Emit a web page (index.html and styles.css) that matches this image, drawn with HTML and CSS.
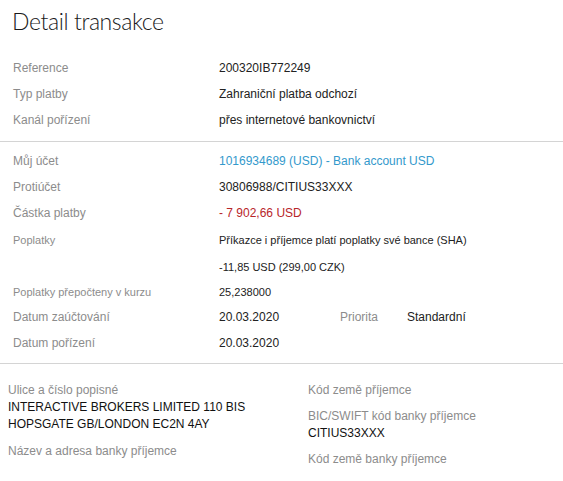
FILE: index.html
```html
<!DOCTYPE html>
<html lang="cs">
<head>
  <meta charset="UTF-8">
  <meta name="viewport" content="width=device-width, initial-scale=1.0">
  <link rel="stylesheet" href="styles.css">
  <title>Detail transakce</title>
</head>
<body>
  <h1 class="title">Detail transakce</h1>

  <div class="section">
    <div class="row"><span class="label">Reference</span><span class="value">200320IB772249</span></div>
    <div class="row"><span class="label">Typ platby</span><span class="value">Zahraniční platba odchozí</span></div>
    <div class="row"><span class="label">Kanál pořízení</span><span class="value">přes internetové bankovnictví</span></div>
  </div>

  <div class="section second">
    <div class="row"><span class="label">Můj účet</span><span class="value link">1016934689 (USD) - Bank account USD</span></div>
    <div class="row"><span class="label">Protiúčet</span><span class="value">30806988/CITIUS33XXX</span></div>
    <div class="row"><span class="label">Částka platby</span><span class="value negative">- 7 902,66 USD</span></div>
    <div class="row small tall"><span class="label">Poplatky</span><span class="value">Příkazce i příjemce platí poplatky své bance (SHA)</span></div>
    <div class="row small tall"><span class="label"></span><span class="value">-11,85 USD (299,00 CZK)</span></div>
    <div class="row small short"><span class="label">Poplatky přepočteny v kurzu</span><span class="value">25,238000</span></div>
    <div class="row">
      <span class="label">Datum zaúčtování</span>
      <span class="value split">
        <span class="date">20.03.2020</span>
        <span class="label inline">Priorita</span>
        <span>Standardní</span>
      </span>
    </div>
    <div class="row"><span class="label">Datum pořízení</span><span class="value">20.03.2020</span></div>
  </div>

  <div class="address">
    <div class="col">
      <div class="field">
        <div class="field-label">Ulice a číslo popisné</div>
        <div class="field-value">INTERACTIVE BROKERS LIMITED 110 BIS</div>
        <div class="field-value">HOPSGATE GB/LONDON EC2N 4AY</div>
      </div>
      <div class="field">
        <div class="field-label">Název a adresa banky příjemce</div>
      </div>
    </div>
    <div class="col">
      <div class="field">
        <div class="field-label">Kód země příjemce</div>
      </div>
      <div class="field">
        <div class="field-label">BIC/SWIFT kód banky příjemce</div>
        <div class="field-value">CITIUS33XXX</div>
      </div>
      <div class="field">
        <div class="field-label">Kód země banky příjemce</div>
      </div>
    </div>
  </div>
</body>
</html>
```

FILE: styles.css
```css
body {
  margin: 0;
  background-color: #ffffff;
  color: #222222;
  font-family: 'Liberation Sans', Arial, sans-serif;
  font-size: 12px;
}

.title {
  margin: 0;
  height: 50px;
  padding: 6px 0 0 12px;
  box-sizing: border-box;
  font-family: 'Lato', sans-serif;
  font-weight: 300;
  font-size: 23px;
  letter-spacing: -0.4px;
  line-height: 30px;
  color: #1a1a1a;
}

.section {
  padding: 5px 0 8px 0;
  border-bottom: 1px solid #d4d4d4;
}

.section.second {
  padding: 6px 0 7px 0;
}

.row {
  display: flex;
  align-items: center;
  height: 26px;
}

.row.tall {
  height: 27px;
}

.row.short {
  height: 24px;
}

.label {
  width: 206px;
  padding-left: 13px;
  flex-shrink: 0;
  color: #8c8c8c;
}

.small {
  font-size: 11px;
}

.value {
  color: #222222;
}

.link {
  color: #3399cc;
}

.negative {
  color: #b8262a;
}

.split {
  display: flex;
}

.date {
  width: 121px;
}

.label.inline {
  width: 67px;
  padding-left: 0;
}

.address {
  display: flex;
  padding-top: 17px;
}

.col {
  display: flex;
  flex-direction: column;
  gap: 8px;
}

.col:first-child {
  width: 300px;
  padding-left: 8px;
  gap: 9px;
}

.field-label {
  color: #8c8c8c;
  line-height: 18px;
}

.field-value {
  color: #111111;
  line-height: 17px;
}
```
